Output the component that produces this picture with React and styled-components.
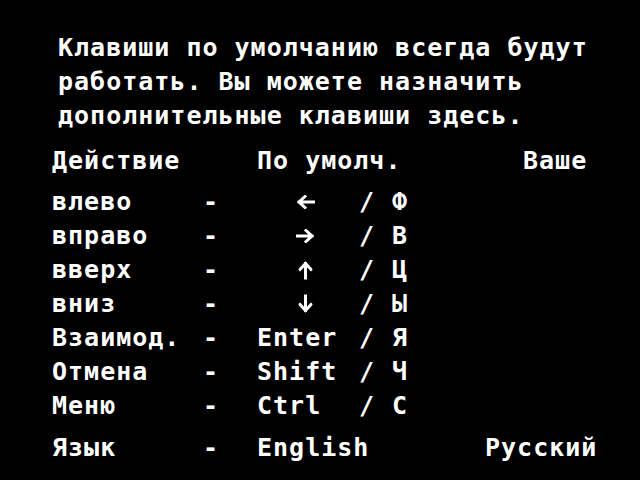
import React from "react";
import styled, { createGlobalStyle } from "styled-components";

const GlobalStyle = createGlobalStyle`
  html, body {
    margin: 0;
    padding: 0;
    background: #000;
  }
  body {
    width: 640px;
    height: 480px;
    overflow: hidden;
  }
`;

const Screen = styled.div`
  width: 640px;
  height: 480px;
  background: #000;
  color: #fff;
  font-family: "DejaVu Sans Mono", "Liberation Mono", monospace;
  font-weight: bold;
  font-size: 25px;
  letter-spacing: 1px;
  line-height: 34px;
  box-sizing: border-box;
  padding-top: 31px;
  white-space: pre;
`;

const Intro = styled.div`
  padding-left: 58px;
`;

const Table = styled.div`
  padding-left: 52px;
  margin-top: 11px;
`;

const HeaderRow = styled.div`
  display: grid;
  grid-template-columns: 205px 266px auto;
  margin-bottom: 7px;
`;

const KeyRow = styled.div`
  display: grid;
  grid-template-columns: 151px 54px 102px 33px auto;
`;

const LangRow = styled.div`
  display: grid;
  grid-template-columns: 151px 54px 228px auto;
  margin-top: 8px;
`;

const ArrowCell = styled.span`
  padding-left: 39px;
`;

const ArrowSvg = styled.svg`
  width: 19px;
  height: 14px;
  vertical-align: 1px;
  transform: rotate(${(p) => p.$rot}deg);
`;

const rotations = { left: 0, right: 180, up: 90, down: -90 };

const Arrow = ({ dir }) => (
  <ArrowSvg viewBox="0 0 19 14" $rot={rotations[dir]}>
    <path
      d="M3 7 H18 M9 1.5 L3 7 L9 12.5"
      fill="none"
      stroke="#fff"
      strokeWidth="3"
      strokeLinecap="square"
      strokeLinejoin="miter"
    />
  </ArrowSvg>
);

const rows = [
  ["влево", "left", "Ф"],
  ["вправо", "right", "В"],
  ["вверх", "up", "Ц"],
  ["вниз", "down", "Ы"],
  ["Взаимод.", "Enter", "Я"],
  ["Отмена", "Shift", "Ч"],
  ["Меню", "Ctrl", "С"],
];

export default function App() {
  return (
    <Screen>
      <GlobalStyle />
      <Intro>
        <div>Клавиши по умолчанию всегда будут</div>
        <div>работать. Вы можете назначить</div>
        <div>дополнительные клавиши здесь.</div>
      </Intro>
      <Table>
        <HeaderRow>
          <span>Действие</span>
          <span>По умолч.</span>
          <span>Ваше</span>
        </HeaderRow>
        {rows.map(([action, def, key]) => (
          <KeyRow key={action}>
            <span>{action}</span>
            <span>-</span>
            {rotations[def] !== undefined ? (
              <ArrowCell>
                <Arrow dir={def} />
              </ArrowCell>
            ) : (
              <span>{def}</span>
            )}
            <span>/</span>
            <span>{key}</span>
          </KeyRow>
        ))}
        <LangRow>
          <span>Язык</span>
          <span>-</span>
          <span>English</span>
          <span>Русский</span>
        </LangRow>
      </Table>
    </Screen>
  );
}
